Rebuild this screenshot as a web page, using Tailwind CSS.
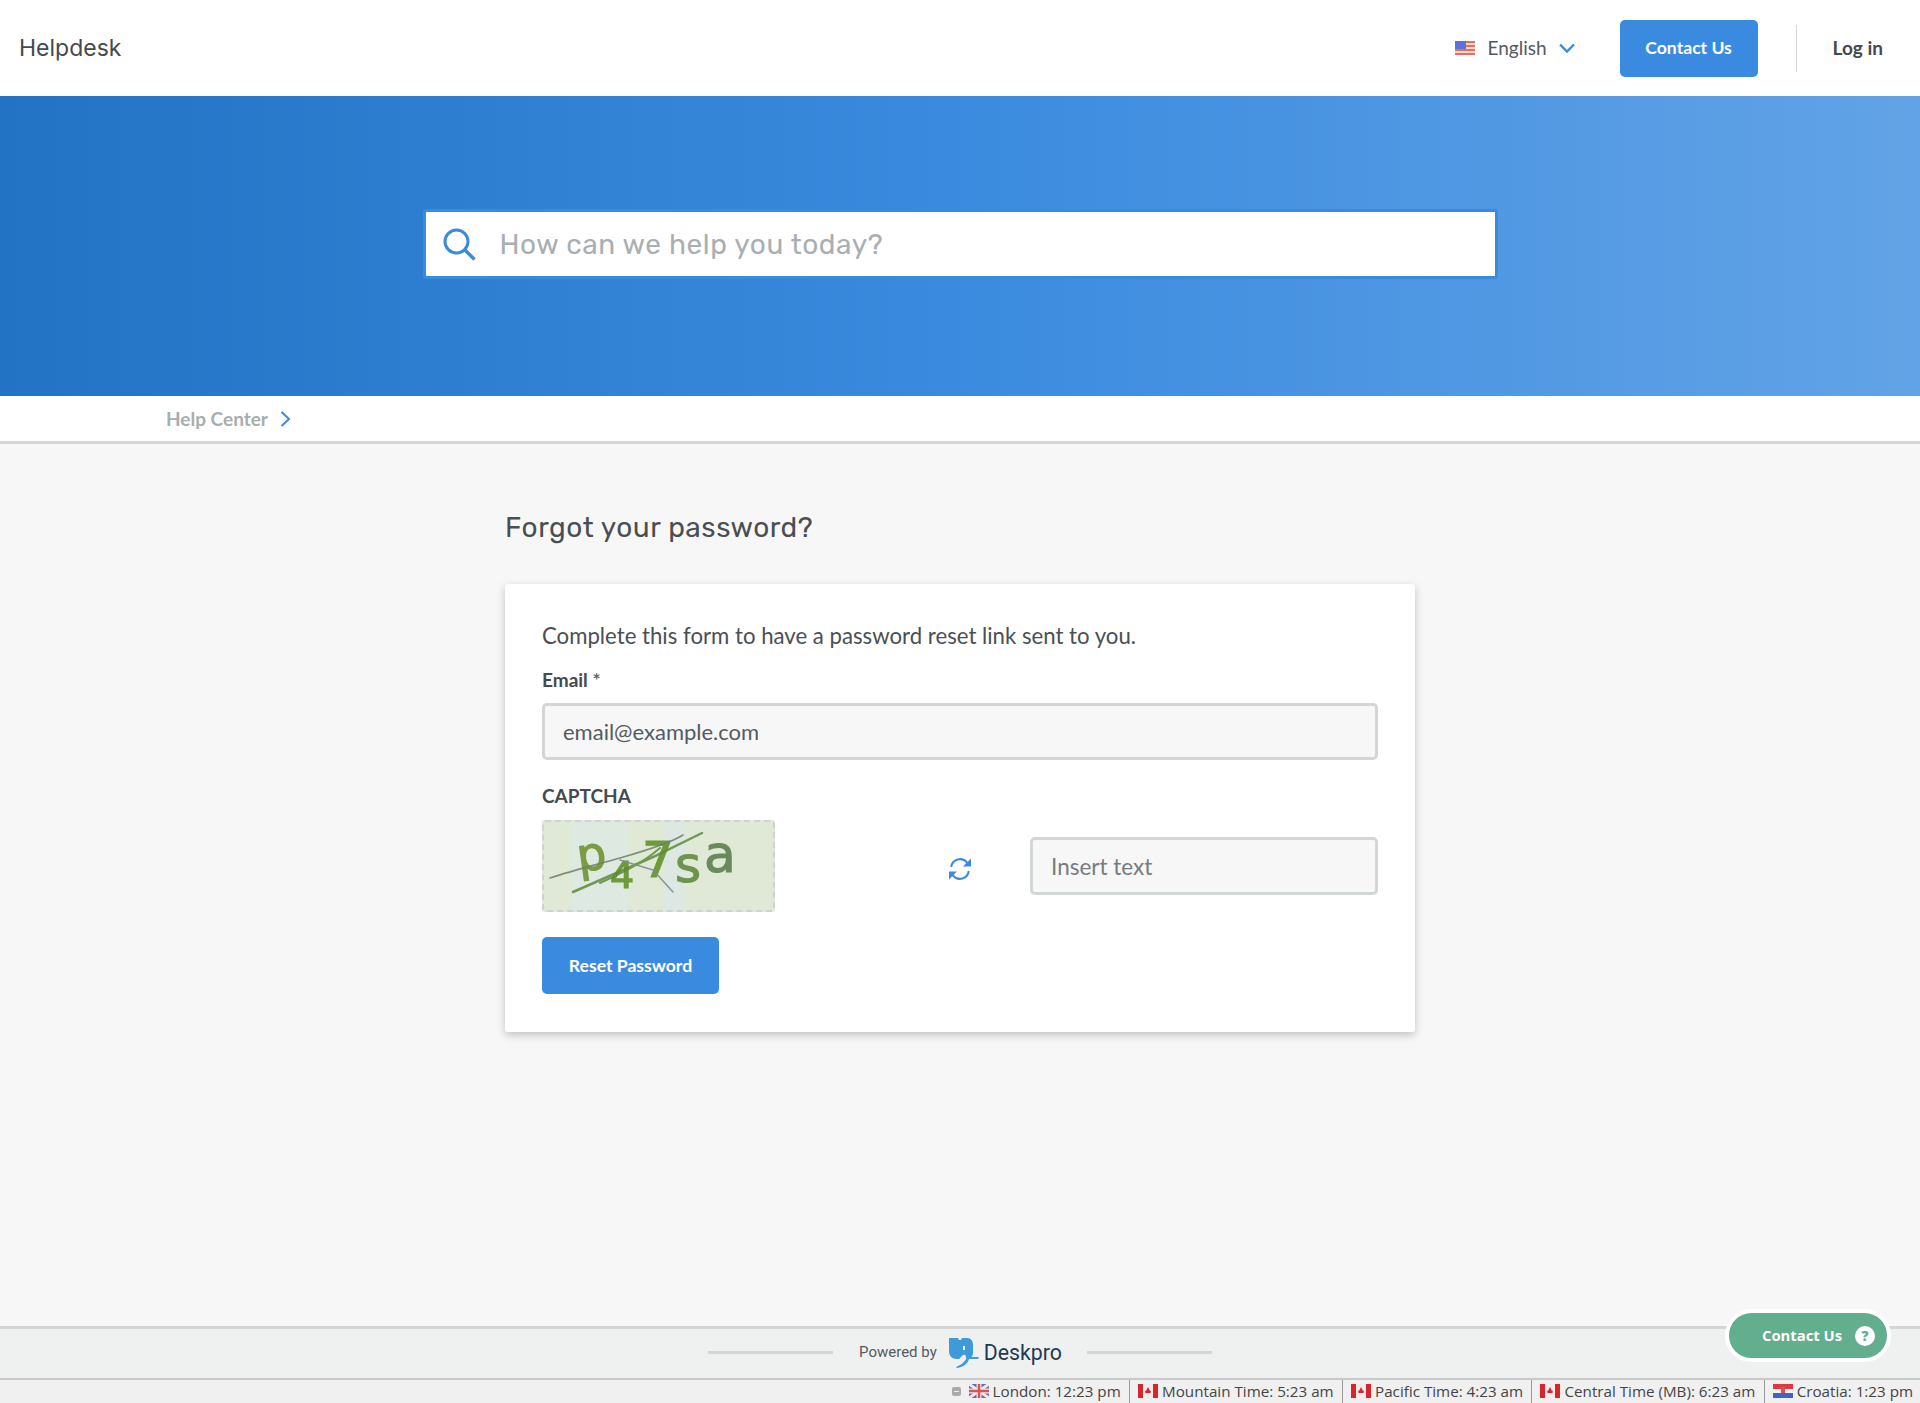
<!DOCTYPE html>
<html lang="en">
<head>
<meta charset="utf-8">
<title>Helpdesk</title>
<script src="https://cdn.jsdelivr.net/npm/@tailwindcss/browser@4"></script>
</head>
<body class="bg-[#f7f7f7] font-['Lato','Liberation_Sans',sans-serif] text-[#444a4f]">
<div class="relative flex h-[1403px] flex-col overflow-hidden">
  <header class="flex h-[96px] shrink-0 items-center bg-white pl-[19px] pr-[37px]">
    <div class="font-['Inter',sans-serif] text-[23px] text-[#45494d]">Helpdesk</div>
    <div class="ml-auto flex items-center">
      <svg class="mr-[13px] h-[14px] w-[20px]" viewBox="0 0 20 14"><rect width="20" height="14" fill="#f4d6d0"/><g fill="#e2705f"><rect y="0" width="20" height="2"/><rect y="4" width="20" height="2"/><rect y="8" width="20" height="2"/><rect y="12" width="20" height="2"/></g><rect width="11" height="8" fill="#5b73d8"/></svg>
      <span class="text-[19px] text-[#555a5f]">English</span>
      <svg class="ml-[12px] h-[10px] w-[16px]" viewBox="0 0 16 10" fill="none" stroke="#3a8bdf" stroke-width="2.4"><path d="M1 1.5 8 8.5 15 1.5"/></svg>
      <a class="ml-[45px] flex h-[57px] w-[138px] items-center justify-center rounded-[5px] bg-[#3a8bdf] pt-[1px] text-[17.6px] font-bold text-white">Contact Us</a>
      <div class="ml-[38px] h-[47px] w-px bg-[#d2d6d5]"></div>
      <a class="ml-[36px] text-[19px] font-bold text-[#45494d]">Log in</a>
    </div>
  </header>

  <section class="flex h-[300px] shrink-0 items-center justify-center bg-gradient-to-r from-[#2273c4] via-[#3a8bdf] to-[#62a3e6] pb-[4px]">
    <div class="flex h-[70px] w-[1075px] items-center rounded-[3px] border-[3px] border-[#3a8bdf] bg-white">
      <svg class="ml-[17px] h-[33px] w-[33px]" viewBox="0 0 33 33" fill="none" stroke="#3a8bdf" stroke-width="3"><circle cx="13.5" cy="13.5" r="11.5"/><path d="M22 22 31.5 31.5" stroke-width="3.4"/></svg>
      <div class="ml-[24px] pt-[1px] font-['Rubik','Inter',sans-serif] text-[28px] font-normal tracking-[0.58px] text-[#a9aeb1]">How can we help you today?</div>
    </div>
  </section>

  <nav class="flex h-[48px] shrink-0 items-center border-b-[3px] border-[#d2d6d5] bg-white pl-[166px]">
    <span class="pt-[1px] text-[19px] font-bold text-[#a8adaf]">Help Center</span>
    <svg class="ml-[12px] h-[16px] w-[11px]" viewBox="0 0 11 16" fill="none" stroke="#3a8bdf" stroke-width="2"><path d="M1.5 1 9 8 1.5 15"/></svg>
  </nav>

  <main class="mx-auto w-[910px] flex-1">
    <h1 class="mt-[67px] font-['Rubik','Inter',sans-serif] text-[28px] font-normal leading-[34px] tracking-[0.52px] text-[#4a4e52]">Forgot your password?</h1>
    <div class="mt-[39px] h-[448px] rounded-[3px] bg-white px-[37px] pt-[37px] shadow-[0_3px_8px_rgba(0,0,0,0.22)]">
      <p class="text-[22.2px] leading-[30px] text-[#4a4f54]">Complete this form to have a password reset link sent to you.</p>
      <label class="mt-[18px] block text-[19px] font-bold leading-[22px]">Email <span class="text-[#666]">*</span></label>
      <div class="mt-[12px] flex h-[57px] items-center rounded-[5px] border-[3px] border-[#d2d6d5] bg-[#f7f7f7] pl-[18px] text-[22px] text-[#555a5f]">email@example.com</div>
      <label class="mt-[24px] block text-[19px] font-bold leading-[24px]">CAPTCHA</label>
      <div class="mt-[12px] grid grid-cols-[1fr_auto_1fr] items-center">
        <div class="h-[92px] w-[233px] overflow-hidden rounded-[3px] border-2 border-dashed border-[#cfd2d2] bg-[#dfe9d6]">
          <svg class="h-[88px] w-[229px]" viewBox="0 0 229 88">
            <rect width="229" height="88" fill="#dfe9d6"/><rect x="28" width="55" height="88" fill="#dee9e2"/><rect x="120" width="22" height="88" fill="#dde8e3"/>
            <g font-family="DejaVu Sans" style="filter:blur(.7px)" stroke-width="1.2">
              <text x="35" y="50" font-size="46" fill="#7a9c42" stroke="#7a9c42" transform="rotate(-8 35 50)">p</text>
              <text x="66" y="66" font-size="38" fill="#6f9a3a" stroke="#6f9a3a">4</text>
              <text x="98" y="55" font-size="50" fill="#6f9a3a" stroke="#6f9a3a">7</text>
              <text x="131" y="60" font-size="50" fill="#6f9350" stroke="#6f9350">s</text>
              <text x="160" y="50" font-size="52" fill="#6b8a5c" stroke="#6b8a5c">a</text>
            </g>
            <g fill="none" stroke-linecap="round" style="filter:blur(.6px)" opacity=".85">
              <path d="M6 56C30 48 55 42 76 36S125 22 139 13" stroke="#6f7f6a" stroke-width="1.6"/>
              <path d="M29 70 109 35 158 11" stroke="#5f8a3a" stroke-width="2.5"/>
              <path d="M76 38 109 48 129 70" stroke="#7b8a92" stroke-width="1.6"/>
              <path d="M56 61C80 50 100 40 116 26" stroke="#5f8a3a" stroke-width="2"/>
            </g>
          </svg>
        </div>
        <svg class="mt-[5px] h-[24px] w-[24px]" viewBox="0 0 24 24" fill="none" stroke="#3a8bdf" stroke-width="2"><path d="M3.200 10A9 9 0 0 1 19 5.400L22 8.400"/><path d="M20.800 14A9 9 0 0 1 5 18.600L2 15.600"/><path d="M23 1.500V9.500H15Z" stroke-width="0" fill="#3a8bdf"/><path d="M1 22.500V14.500H9Z" stroke-width="0" fill="#3a8bdf"/></svg>
        <div class="flex h-[58px] w-[348px] items-center justify-self-end rounded-[5px] border-[3px] border-[#d2d6d5] bg-[#f7f7f7] pl-[18px] pt-[1px] text-[22.5px] text-[#767b80]">Insert text</div>
      </div>
      <a class="mt-[25px] flex h-[57px] w-[177px] items-center justify-center rounded-[5px] bg-[#3a8bdf] pt-[1px] text-[17.6px] font-bold text-white">Reset Password</a>
    </div>
  </main>

  <footer class="flex h-[52px] shrink-0 items-center justify-center border-t-[3px] border-[#d2d6d5] bg-[#eff1f1] pb-[2px]">
    <div class="h-[3px] w-[125px] bg-[#d2d6d5]"></div>
    <span class="ml-[26px] font-['Roboto',sans-serif] text-[15px] text-[#555a5f]">Powered by</span>
    <svg class="ml-[12px] h-[32px] w-[30px]" viewBox="0 0 30 32"><path d="M0 1H9L10 3H12L13 1H18C22 1 24 4 24 8V16C24 19 22 21 19 21H17C17 18 16 17 14 18L10 22H8C3 22 0 19 0 14Z" fill="#3f9ad9"/><path d="M18 20H30L29 22H20C19 26 15 30 8 31L7 30C12 28 16 25 18 20Z" fill="#3f9ad9"/><path d="M15 9V13" stroke="#eff1f1" stroke-width="2"/></svg>
    <span class="ml-[5px] font-['Roboto',sans-serif] text-[21.3px] text-[#1f3a53]">Deskpro</span>
    <div class="ml-[25px] h-[3px] w-[125px] bg-[#d2d6d5]"></div>
  </footer>

  <div class="flex h-[25px] shrink-0 items-center justify-end gap-[8.2px] border-t-2 border-[#c8c8c8] bg-[#f0f0f0] pr-[7px] font-['Open_Sans',sans-serif] text-[15.2px] text-[#444]">
    <span class="mr-[-1px] flex h-[9px] w-[9px] items-center justify-center rounded-[2px] bg-[#aaa]"><span class="h-[1px] w-[5px] bg-[#eee]"></span></span>
    <span class="flex items-center gap-[4px]"><svg class="h-[14px] w-[20px]" viewBox="0 0 20 14"><rect width="20" height="14" fill="#5a6fb8"/><path d="M0 0 20 14M20 0 0 14" stroke="#f3e6e6" stroke-width="3"/><path d="M10 0V14M0 7H20" stroke="#f3e6e6" stroke-width="5"/><path d="M10 0V14M0 7H20" stroke="#d9534f" stroke-width="2.500"/></svg>London: 12:23 pm</span>
    <span class="h-[23px] w-px bg-[#999]"></span>
    <span class="flex items-center gap-[4px]"><svg class="h-[14px] w-[20px]" viewBox="0 0 20 14"><rect width="20" height="14" fill="#f4eaea"/><rect width="5" height="14" fill="#d8242c"/><rect x="15" width="5" height="14" fill="#d8242c"/><path d="M10 3 12 7 13 6.500 12.500 9H7.500L7 6.500 8 7Z" fill="#d8242c"/></svg>Mountain Time: 5:23 am</span>
    <span class="h-[23px] w-px bg-[#999]"></span>
    <span class="flex items-center gap-[4px]"><svg class="h-[14px] w-[20px]" viewBox="0 0 20 14"><rect width="20" height="14" fill="#f4eaea"/><rect width="5" height="14" fill="#d8242c"/><rect x="15" width="5" height="14" fill="#d8242c"/><path d="M10 3 12 7 13 6.500 12.500 9H7.500L7 6.500 8 7Z" fill="#d8242c"/></svg>Pacific Time: 4:23 am</span>
    <span class="h-[23px] w-px bg-[#999]"></span>
    <span class="flex items-center gap-[4px]"><svg class="h-[14px] w-[20px]" viewBox="0 0 20 14"><rect width="20" height="14" fill="#f4eaea"/><rect width="5" height="14" fill="#d8242c"/><rect x="15" width="5" height="14" fill="#d8242c"/><path d="M10 3 12 7 13 6.500 12.500 9H7.500L7 6.500 8 7Z" fill="#d8242c"/></svg>Central Time (MB): 6:23 am</span>
    <span class="h-[23px] w-px bg-[#999]"></span>
    <span class="flex items-center gap-[4px]"><svg class="h-[14px] w-[20px]" viewBox="0 0 20 14"><rect width="20" height="5" fill="#e0383c"/><rect y="5" width="20" height="4" fill="#f2f2f2"/><rect y="9" width="20" height="5" fill="#3f63c8"/><rect x="8" y="3" width="4" height="6" fill="#d9534f"/></svg>Croatia: 1:23 pm</span>
  </div>

  <a class="absolute left-[1725px] top-[1309px] flex h-[53px] w-[166px] items-center rounded-full border-4 border-white bg-[#62ae8e] pl-[33px] font-['Open_Sans',sans-serif] text-[14.8px] font-bold text-white">
    Contact Us
    <span class="ml-[13px] flex h-[20px] w-[20px] items-center justify-center rounded-full bg-white text-[14px] font-extrabold text-[#62ae8e]">?</span>
  </a>
</div>
</body>
</html>
